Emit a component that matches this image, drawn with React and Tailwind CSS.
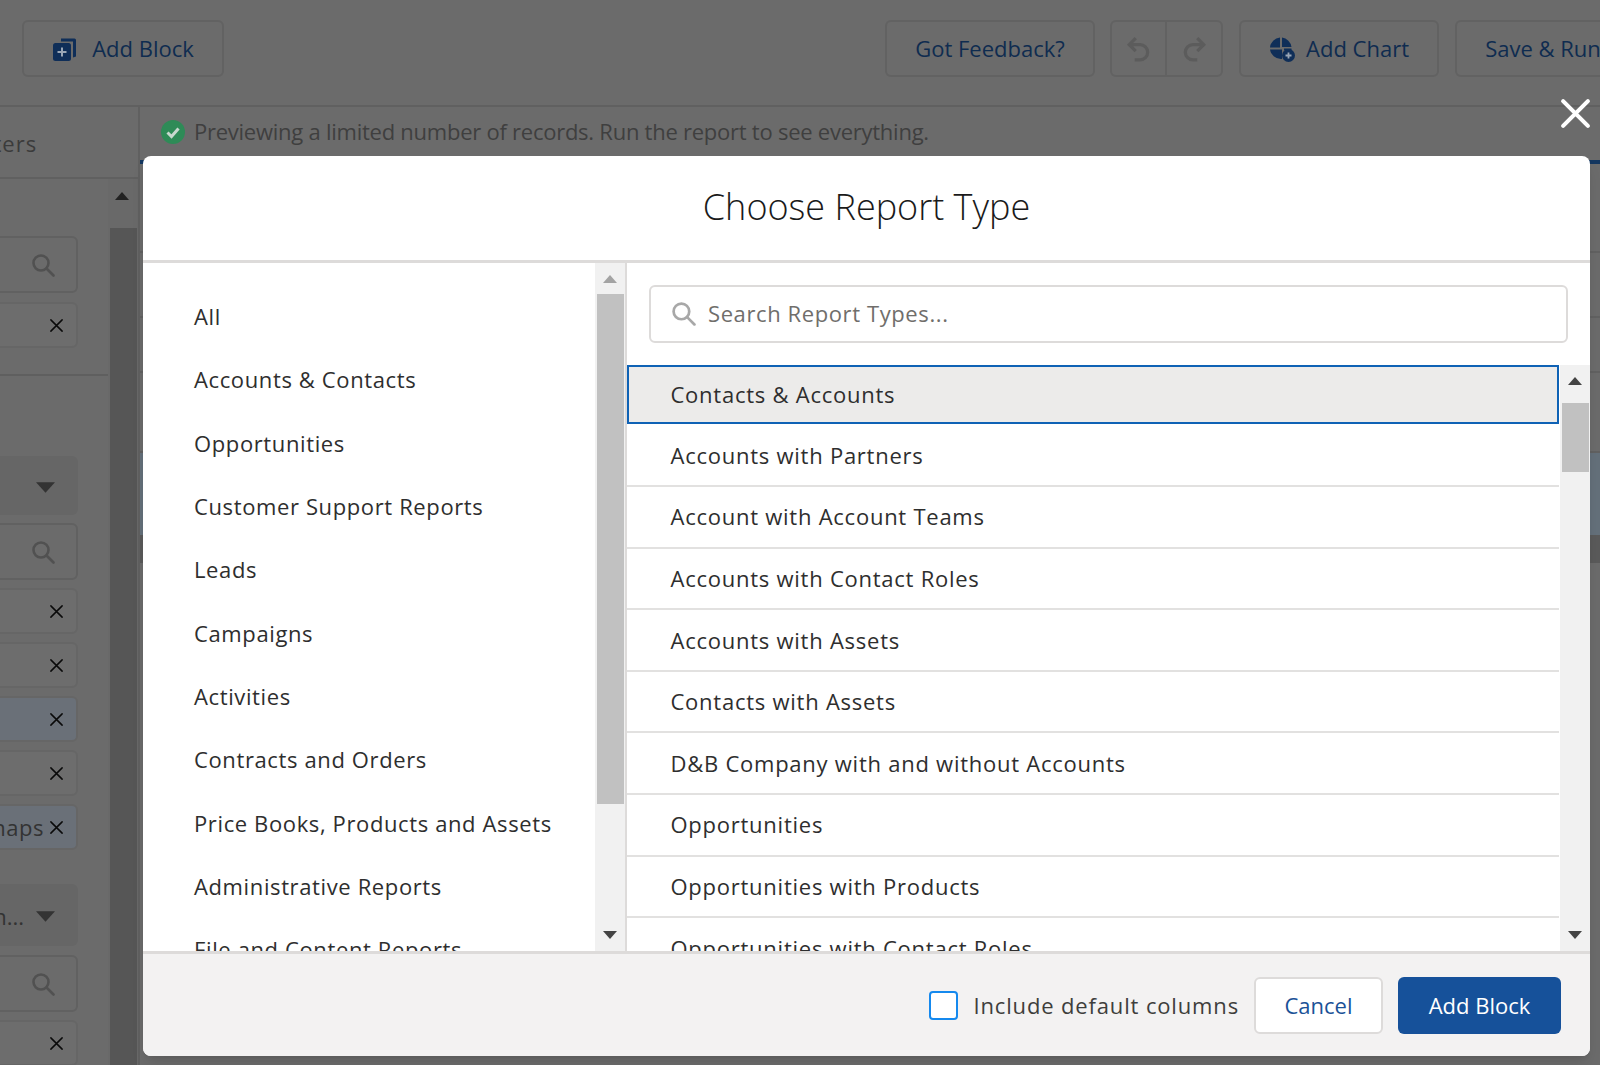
const CATEGORIES = [
  'All',
  'Accounts & Contacts',
  'Opportunities',
  'Customer Support Reports',
  'Leads',
  'Campaigns',
  'Activities',
  'Contracts and Orders',
  'Price Books, Products and Assets',
  'Administrative Reports',
  'File and Content Reports',
]

const REPORT_TYPES = [
  'Accounts with Partners',
  'Account with Account Teams',
  'Accounts with Contact Roles',
  'Accounts with Assets',
  'Contacts with Assets',
  'D&B Company with and without Accounts',
  'Opportunities',
  'Opportunities with Products',
  'Opportunities with Contact Roles',
]

function SearchIcon({ className }) {
  return (
    <svg viewBox="0 0 24 24" fill="none" stroke="currentColor" strokeWidth="2.6" strokeLinecap="round" className={className}>
      <circle cx="10" cy="10" r="7.5" />
      <path d="M15.5 15.5 22.5 22.5" />
    </svg>
  )
}

function CloseIcon({ className }) {
  return (
    <svg viewBox="0 0 24 24" fill="none" stroke="currentColor" strokeWidth="2.4" strokeLinecap="round" className={className}>
      <path d="M3 3 21 21M21 3 3 21" />
    </svg>
  )
}

function Triangle({ down, className }) {
  return (
    <svg viewBox="0 0 16 9" fill="currentColor" className={className}>
      <path d={down ? 'M0 0h16L8 9z' : 'M8 0l8 9H0z'} />
    </svg>
  )
}

function Scrollbar({ upClass, downClass, upHeight, thumbHeight, upPad = 0 }) {
  return (
    <div className="w-[30px] shrink-0 bg-[#f1f1f1] flex flex-col items-center relative">
      <div className="w-full flex items-center justify-center" style={{ height: upHeight, paddingBottom: upPad }}>
        <Triangle className={`w-[14px] h-[8px] ${upClass}`} />
      </div>
      <div className="w-[27px] bg-[#c1c1c1]" style={{ height: thumbHeight }} />
      <Triangle down className={`absolute bottom-[12px] w-[14px] h-[8px] ${downClass}`} />
    </div>
  )
}

function ToolButton({ className = '', children }) {
  return (
    <div className={`h-[57px] shrink-0 flex items-center justify-center border-2 border-[#626262] rounded-md text-[#0f2c50] text-[22px] ${className}`}>
      {children}
    </div>
  )
}

function SideSearch({ className = '' }) {
  return (
    <div className={`h-[57px] border-2 border-[#616161] rounded-md flex items-center justify-end pr-[21px] ${className}`}>
      <SearchIcon className="w-[24px] h-[24px] text-[#515151]" />
    </div>
  )
}

function SideChip({ blue, label, className = '' }) {
  return (
    <div className={`h-[46px] rounded-md border-2 border-[#666] flex items-center justify-end pr-[12px] gap-[5px] text-[22px] text-[#333] ${blue ? 'bg-[#6a7078]' : 'bg-[#6d6d6d]'} ${className}`}>
      {label && <span className="tracking-wide">{label}</span>}
      <CloseIcon className="w-[15px] h-[15px] text-[#0a0a0a]" />
    </div>
  )
}

function SideDropdown({ label, className = '' }) {
  return (
    <div className={`rounded-md bg-[#666] flex items-center justify-end pr-[23px] pt-[3px] gap-[12px] text-[22px] text-[#333] ${className}`}>
      {label && <span>{label}</span>}
      <Triangle down className="w-[19px] h-[11px] text-[#333]" />
    </div>
  )
}

function Backdrop() {
  return (
    <div className="h-full flex flex-col bg-[#6b6b6b]">
      {/* Toolbar */}
      <div className="h-[107px] shrink-0 flex items-center pl-[22px] pb-[8px] overflow-hidden border-b-2 border-[#606060]">
        <ToolButton className="w-[202px] gap-[14px]">
          <svg viewBox="0 0 26 26" className="w-[26px] h-[26px] text-[#0f2e58]" fill="none">
            <path d="M9 2.5h13.5a1.5 1.5 0 0 1 1.5 1.5v16.5l-3 1V5.5H9z" fill="currentColor" />
            <rect x="1" y="7" width="18" height="18" rx="2.5" fill="currentColor" />
            <path d="M10 11.5v9M5.5 16h9" stroke="#9aa6b5" strokeWidth="2" />
          </svg>
          <span>Add Block</span>
        </ToolButton>
        <ToolButton className="ml-auto w-[210px]">Got Feedback?</ToolButton>
        <div className="ml-[15px] w-[113px] h-[57px] shrink-0 flex border-2 border-[#626262] rounded-md text-[#5c5c5c]">
          <div className="w-[55px] flex items-center justify-center border-r-2 border-[#626262]">
            <svg viewBox="0 0 24 24" fill="none" stroke="currentColor" strokeWidth="3" className="w-[26px] h-[26px]">
              <path d="M9 2 3 8l6 6M3 8h10a7 7 0 0 1 0 14H8" />
            </svg>
          </div>
          <div className="flex-1 flex items-center justify-center">
            <svg viewBox="0 0 24 24" fill="none" stroke="currentColor" strokeWidth="3" className="w-[26px] h-[26px]">
              <path d="M15 2l6 6-6 6M21 8H11a7 7 0 0 0 0 14h4" />
            </svg>
          </div>
        </div>
        <ToolButton className="ml-[16px] w-[200px] gap-[11px]">
          <svg viewBox="0 0 26 26" className="w-[26px] h-[26px] text-[#0f2e58]">
            <path d="M11 1.5a11 11 0 0 0-10 10h10zM13 1.500a11 11 0 0 1 9.500 9.500h-9.500zM1 13.500a11 11 0 0 0 11 9.500 11 11 0 0 0 1-.1V13.500z" fill="currentColor" />
            <path d="M15 13.500h7.500" stroke="currentColor" strokeWidth="2" />
            <circle cx="19.500" cy="19.500" r="6.500" fill="currentColor" />
            <path d="M19.500 16.500v6M16.500 19.500h6" stroke="#9aa6b5" strokeWidth="1.800" />
          </svg>
          <span>Add Chart</span>
        </ToolButton>
        <ToolButton className="ml-[16px] w-[176px] -mr-[31px]">Save &amp; Run</ToolButton>
      </div>

      <div className="flex-1 min-h-0 flex">
        {/* Field sidebar */}
        <div className="w-[140px] shrink-0 flex flex-col border-r-2 border-[#606060]">
          <div className="h-[72px] shrink-0 flex items-center overflow-hidden border-b-2 border-[#606060] pt-[2px]">
            <span className="-ml-[32px] text-[22px] tracking-[1px] text-[#3b3b3b]">Filters</span>
          </div>
          <div className="flex-1 min-h-0 flex">
            <div className="flex-1 min-w-0 overflow-hidden">
              <div className="pr-[30px] -ml-[20px]">
                <SideSearch className="mt-[57px]" />
                <SideChip className="mt-[9px]" />
              </div>
              <div className="border-b-2 border-[#5f5f5f] mt-[26px]" />
              <div className="pr-[30px] -ml-[20px]">
                <SideDropdown className="mt-[80px] h-[59px]" />
                <SideSearch className="mt-[8px]" />
                <SideChip className="mt-[8px]" />
                <SideChip className="mt-[8px]" />
                <SideChip blue className="mt-[8px]" />
                <SideChip className="mt-[8px]" />
                <SideChip blue label="naps" className="mt-[8px]" />
                <SideDropdown label="n..." className="mt-[34px] h-[62px]" />
                <SideSearch className="mt-[9px]" />
                <SideChip className="mt-[8px]" />
              </div>
            </div>
            <div className="w-[30px] shrink-0 flex flex-col items-center bg-[#696969]">
              <div className="h-[49px] shrink-0 flex justify-center pt-[13px] pr-[2px]">
                <Triangle className="w-[14px] h-[8px] text-[#222]" />
              </div>
              <div className="flex-1 w-[27px] bg-[#565656]" />
            </div>
          </div>
        </div>

        {/* Report preview */}
        <div className="flex-1 min-w-0 flex flex-col">
          <div className="h-[53px] shrink-0 flex items-center pl-[21px] pb-[4px] gap-[9px] text-[22px] tracking-[-0.25px] text-[#3f3f3f]">
            <svg viewBox="0 0 24 24" className="w-[24px] h-[24px] shrink-0">
              <circle cx="12" cy="12" r="12" fill="#2e8b57" />
              <path d="M6.500 12.500 10.500 16.500 17.500 8.500" fill="none" stroke="#c8d8cf" strokeWidth="3" />
            </svg>
            <span className="whitespace-nowrap">Previewing a limited number of records. Run the report to see everything.</span>
          </div>
          <div className="h-[4px] shrink-0 bg-[#13365f]" />
          <div className="h-[89px] shrink-0 border-b-2 border-[#616161]" />
          <div className="h-[65px] shrink-0 border-b-2 border-[#616161]" />
          <div className="h-[55px] shrink-0 border-b-2 border-[#616161]" />
          <div className="h-[80px] shrink-0 border-b-2 border-[#616161]" />
          <div className="h-[82px] shrink-0 bg-[#64707a]" />
          <div className="h-[28px] shrink-0 bg-[#5a5a5a]" />
        </div>
      </div>
    </div>
  )
}

export default function App() {
  return (
    <div className="relative w-full h-screen overflow-hidden font-['Open_Sans',sans-serif]">
      <Backdrop />

      <CloseIcon className="absolute left-[1559px] top-[97px] w-[33px] h-[33px] text-white [stroke-width:3px]" />

      {/* Modal */}
      <div className="absolute left-[143px] top-[156px] w-[1447px] h-[900px] flex flex-col bg-white rounded-lg overflow-hidden shadow-lg">
        <div className="h-[107px] shrink-0 flex items-center justify-center border-b-[3px] border-[#dddbda] pb-[2px]">
          <h2 className="text-[36px] font-light text-[#1a1a1a]">Choose Report Type</h2>
        </div>

        <div className="flex-1 min-h-0 flex">
          {/* Categories */}
          <div className="w-[484px] shrink-0 flex border-r-2 border-[#dddbda]">
            <div className="flex-1 min-w-0 overflow-hidden pl-[51px] pt-[22px]">
              {CATEGORIES.map(c => (
                <div key={c} className="h-[63.3px] flex items-center text-[22px] tracking-[0.62px] text-[#2e2e2e] whitespace-nowrap">
                  {c}
                </div>
              ))}
            </div>
            <Scrollbar upHeight={31} thumbHeight={510} upClass="text-[#a3a3a3]" downClass="text-[#444]" />
          </div>

          {/* Report types */}
          <div className="flex-1 min-w-0 flex flex-col">
            <div className="h-[102px] shrink-0 pt-[22px] pl-[22px] pr-[22px]">
              <div className="h-[58px] flex items-center pl-[20px] pb-[1px] gap-[12px] border-2 border-[#dddbda] rounded-md">
                <SearchIcon className="w-[25px] h-[25px] text-[#a8a8a8]" />
                <span className="text-[22px] tracking-[0.6px] text-[#706e6b]">Search Report Types...</span>
              </div>
            </div>
            <div className="flex-1 min-h-0 flex">
              <div className="flex-1 min-w-0 overflow-hidden mr-[1px]">
                <div className="h-[59px] flex items-center pl-[41.5px] mb-[1.5px] bg-[#ecebea] border-2 border-[#0f62b5] text-[22px] tracking-[0.75px] text-[#2e2e2e]">
                  Contacts &amp; Accounts
                </div>
                {REPORT_TYPES.map(r => (
                  <div key={r} className="h-[61.6px] flex items-center pl-[43.5px] border-b-2 border-[#e2e1e0] text-[22px] tracking-[0.75px] text-[#2e2e2e] whitespace-nowrap">
                    {r}
                  </div>
                ))}
              </div>
              <Scrollbar upHeight={38} upPad={6} thumbHeight={69} upClass="text-[#444]" downClass="text-[#444]" />
            </div>
          </div>
        </div>

        {/* Footer */}
        <div className="h-[105px] shrink-0 flex items-center justify-end pr-[29px] bg-[#f3f2f2] border-t-[3px] border-[#dddbda]">
          <div className="w-[29px] h-[29px] bg-white border-2 border-[#1589ee] rounded-[4px]" />
          <span className="ml-[15px] text-[22px] tracking-[0.85px] text-[#3e3e3c]">Include default columns</span>
          <div className="ml-[15px] w-[129px] h-[57px] flex items-center justify-center bg-white border-2 border-[#dddbda] rounded-md text-[22px] text-[#1b5297]">
            Cancel
          </div>
          <div className="ml-[15px] w-[163px] h-[57px] flex items-center justify-center bg-[#16519a] rounded-md text-[22px] text-white">
            Add Block
          </div>
        </div>
      </div>
    </div>
  )
}
